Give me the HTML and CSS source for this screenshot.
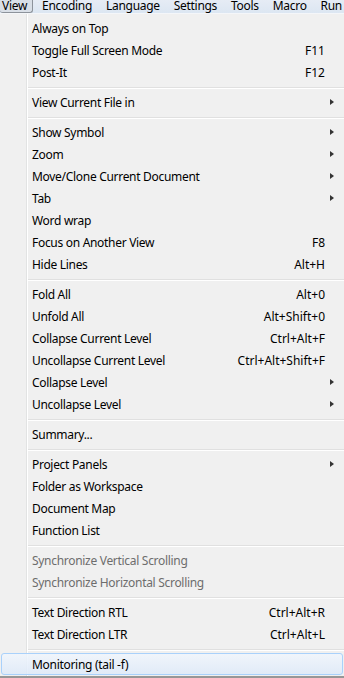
FILE: index.html
```html
<!DOCTYPE html>
<html lang="en">
<head>
    <meta charset="UTF-8">
    <meta name="viewport" content="width=device-width, initial-scale=1.0">
    <title>View Menu</title>
    <link rel="stylesheet" href="styles.css">
</head>
<body>
    <!-- Menu bar -->
    <div class="menubar">
        <span class="menubar-item active">View</span>
        <span class="menubar-item">Encoding</span>
        <span class="menubar-item">Language</span>
        <span class="menubar-item">Settings</span>
        <span class="menubar-item">Tools</span>
        <span class="menubar-item">Macro</span>
        <span class="menubar-item">Run</span>
    </div>

    <!-- Drop down -->
    <div class="menu">
        <div class="item"><span class="label">Always on Top</span></div>
        <div class="item"><span class="label">Toggle Full Screen Mode</span><span class="key">F11</span></div>
        <div class="item"><span class="label">Post-It</span><span class="key">F12</span></div>
        <div class="sep"></div>
        <div class="item"><span class="label">View Current File in</span><span class="arrow"></span></div>
        <div class="sep"></div>
        <div class="item"><span class="label">Show Symbol</span><span class="arrow"></span></div>
        <div class="item"><span class="label">Zoom</span><span class="arrow"></span></div>
        <div class="item"><span class="label">Move/Clone Current Document</span><span class="arrow"></span></div>
        <div class="item"><span class="label">Tab</span><span class="arrow"></span></div>
        <div class="item"><span class="label">Word wrap</span></div>
        <div class="item"><span class="label">Focus on Another View</span><span class="key">F8</span></div>
        <div class="item"><span class="label">Hide Lines</span><span class="key">Alt+H</span></div>
        <div class="sep"></div>
        <div class="item"><span class="label">Fold All</span><span class="key">Alt+0</span></div>
        <div class="item"><span class="label">Unfold All</span><span class="key">Alt+Shift+0</span></div>
        <div class="item"><span class="label">Collapse Current Level</span><span class="key">Ctrl+Alt+F</span></div>
        <div class="item"><span class="label">Uncollapse Current Level</span><span class="key">Ctrl+Alt+Shift+F</span></div>
        <div class="item"><span class="label">Collapse Level</span><span class="arrow"></span></div>
        <div class="item"><span class="label">Uncollapse Level</span><span class="arrow"></span></div>
        <div class="sep"></div>
        <div class="item"><span class="label">Summary...</span></div>
        <div class="sep"></div>
        <div class="item"><span class="label">Project Panels</span><span class="arrow"></span></div>
        <div class="item"><span class="label">Folder as Workspace</span></div>
        <div class="item"><span class="label">Document Map</span></div>
        <div class="item"><span class="label">Function List</span></div>
        <div class="sep"></div>
        <div class="item disabled"><span class="label">Synchronize Vertical Scrolling</span></div>
        <div class="item disabled"><span class="label">Synchronize Horizontal Scrolling</span></div>
        <div class="sep"></div>
        <div class="item"><span class="label">Text Direction RTL</span><span class="key">Ctrl+Alt+R</span></div>
        <div class="item"><span class="label">Text Direction LTR</span><span class="key">Ctrl+Alt+L</span></div>
        <div class="sep"></div>
        <div class="item hover"><span class="label">Monitoring (tail -f)</span></div>
    </div>
</body>
</html>
```

FILE: styles.css
```css
/* Basic reset */
* {
    margin: 0;
    padding: 0;
    box-sizing: border-box;
}
body {
    width: 344px;
    height: 678px;
    overflow: hidden;
    font-family: "Noto Sans", Arial, sans-serif;
    font-size: 12px;
    letter-spacing: -0.3px;
    color: #000;
    background: #f0f0f0;
}
/* Menu bar */
.menubar {
    display: flex;
    height: 14px;
    background: linear-gradient(#e6ecf5, #dce6f2);
    border-bottom: 1px solid #f4f6f9;
    overflow: hidden;
}
.menubar-item {
    height: 13px;
    line-height: 11px;
    padding: 0 7px;
    white-space: nowrap;
}
.menubar-item.active {
    padding: 0 5px 0 2px;
    margin-right: 2px;
    background: #d9dfe7;
    border: 1px solid #8d939b;
    border-top: none;
    border-left: none;
    border-radius: 0 0 3px 3px;
}
/* Drop down */
.menu {
    padding-top: 3px;
    height: 664px;
    background-color: #f0f0f0;
    background-image: linear-gradient(to right, transparent 26px, #e2e3e3 26px, #e2e3e3 27px, #fff 27px, #fff 28px, transparent 28px);
    border-bottom: 2px solid #979797;
}
.item {
    display: grid;
    grid-template-columns: 32px 1fr auto 19px;
    align-items: center;
    height: 22px;
    white-space: nowrap;
}
.label {
    grid-column: 2;
}
.key {
    grid-column: 3;
    letter-spacing: 0;
}
.arrow {
    grid-column: 4;
    justify-self: start;
    margin-left: 5px;
    width: 0;
    height: 0;
    border-top: 3.5px solid transparent;
    border-bottom: 3.5px solid transparent;
    border-left: 4px solid #333;
}
.disabled {
    color: #6d6d6d;
}
.hover {
    margin: 0 1px;
    grid-template-columns: 30px 1fr auto 18px;
    border: 1px solid #a9d1fb;
    border-radius: 3px;
    background: linear-gradient(rgba(240, 246, 253, 0.85), rgba(222, 234, 249, 0.85));
}
.sep {
    height: 8px;
    margin-left: 28px;
    background: linear-gradient(transparent 4px, #e0e0e0 4px, #e0e0e0 5px, #fff 5px, #fff 6px, transparent 6px);
}
```
